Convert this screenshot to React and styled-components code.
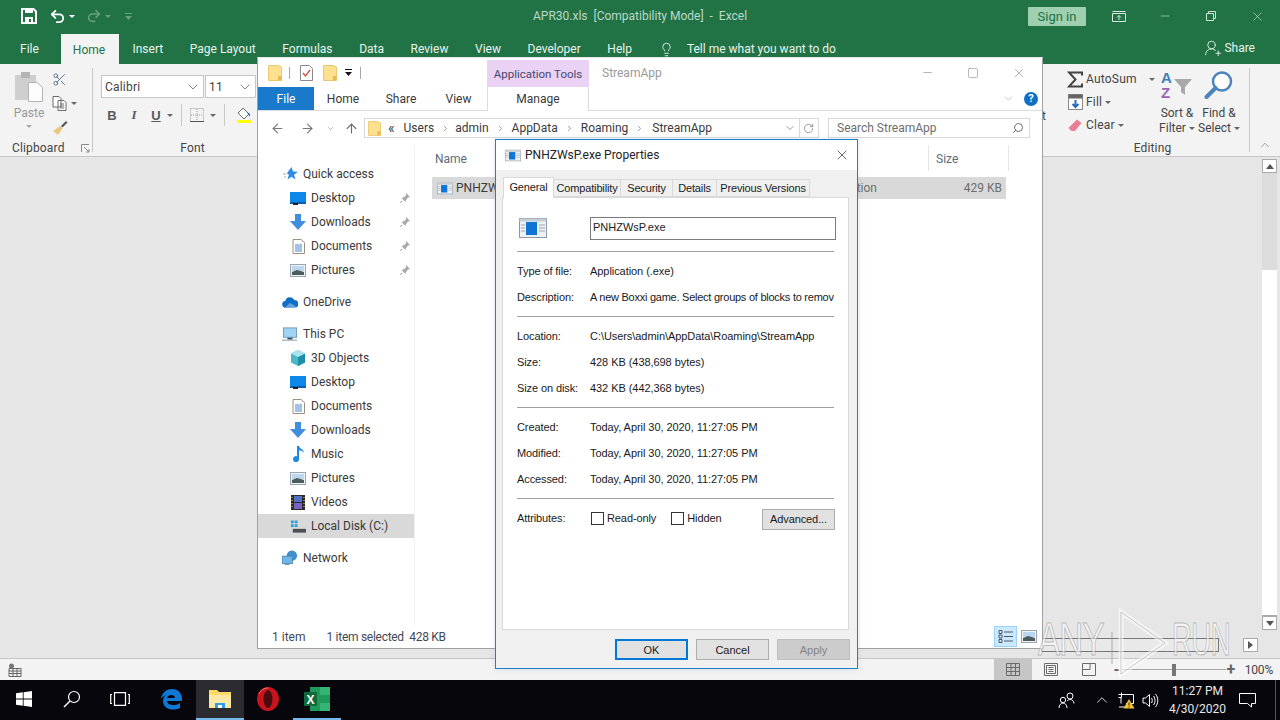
import React from 'react'
import styled, { createGlobalStyle } from 'styled-components'
import {
  ArrowLeft, ArrowRight, ArrowUp, ChevronDown, ChevronRight, ChevronUp,
  Lightbulb, RotateCw, Scissors, Search, Undo2, Redo2, UserRoundPlus, X, Minus, Square,
} from 'lucide-react'

const GlobalStyle = createGlobalStyle`
  html, body { margin: 0; padding: 0; background: #e6e6e6; }
  * { box-sizing: border-box; }
  body { font-family: "Roboto", "Liberation Sans", sans-serif; font-size: 12px; color: #444; }
`

const Screen = styled.div`
  position: relative;
  width: 1280px;
  height: 720px;
  overflow: hidden;
  display: flex;
  flex-direction: column;
  background: #e6e6e6;
`
const Grow = styled.span`
  flex: 1;
`

/* excel chrome */
const TitleBar = styled.div`
  height: 32px;
  background: #217346;
  display: flex;
  align-items: center;
  color: #fff;
`
const QuickAccess = styled.div`
  display: flex;
  align-items: center;
  width: 480px;
  padding-left: 21px;
  gap: 3px;
`
const QatItem = styled.span`
  display: flex;
  align-items: center;
  margin-left: ${p => p.$left || 0}px;
  opacity: ${p => (p.$dim ? 0.32 : 1)};
`
const Caption = styled.div`
  flex: 1;
  padding-left: 53px;
  font-size: 12px;
  color: #bcd8c8;
  white-space: pre;
`
const SignIn = styled.div`
  width: 58px;
  height: 19px;
  margin-right: 10px;
  background: #9ecfb1;
  border-radius: 1px;
  color: #217346;
  font-size: 13px;
  display: flex;
  align-items: center;
  justify-content: center;
`
const WinCtrl = styled.div`
  width: 46px;
  display: flex;
  justify-content: center;
  color: #cfe3d7;
`
const TabBar = styled.div`
  height: 32px;
  background: #217346;
  display: flex;
  align-items: flex-end;
  padding-left: 7px;
  color: #e8f2ec;
`
const RibbonTab = styled.div`
  height: ${p => (p.$active ? 30 : 32)}px;
  padding: 2px ${p => p.$padR || p.$pad || 13.3}px 0 ${p => p.$pad || 13.3}px;
  display: flex;
  align-items: center;
  gap: 12.5px;
  font-size: 12px;
  background: ${p => (p.$active ? '#f3f3f3' : 'transparent')};
  color: ${p => (p.$active ? '#217346' : '#e8f2ec')};
`
const ShareBox = styled.div`
  margin-left: auto;
  margin-right: 25px;
  height: 32px;
  display: flex;
  align-items: center;
  gap: 2px;
  font-size: 12px;
`
const Ribbon = styled.div`
  height: 93px;
  background: #f3f3f3;
  border-bottom: 1px solid #c6c6c6;
  display: flex;
  padding-top: 4px;
`
const Group = styled.div`
  width: ${p => p.$w}px;
  height: 84px;
  border-right: 1px solid #c8c8c8;
  display: flex;
  flex-direction: column;
`
const GroupBody = styled.div`
  flex: 1;
  display: flex;
  min-height: 0;
`
const GroupLabel = styled.div`
  height: 16px;
  margin-bottom: -4px;
  display: flex;
  align-items: center;
  justify-content: ${p => (p.$split ? 'space-between' : 'center')};
  padding: 0 ${p => (p.$split ? 2 : 0)}px 0 ${p => (p.$split ? 12 : 0)}px;
  letter-spacing: 0.15px;
  color: #444;
`
const PasteCol = styled.div`
  width: 46px;
  margin-left: 6px;
  padding-top: 3px;
  display: flex;
  flex-direction: column;
  align-items: center;
  color: #9a9a9a;
  line-height: 16px;
`
const PasteLabel = styled.span`
  margin: 2px 0 4px;
`
const ClipTools = styled.div`
  display: flex;
  flex-direction: column;
  gap: 4px;
  margin-top: 1px;
`
const ToolRow = styled.div`
  height: 20px;
  display: flex;
  align-items: center;
  gap: 4px;
`
const TinyCaret = styled.span`
  display: inline-block;
  vertical-align: middle;
  width: 0;
  height: 0;
  border-left: 3px solid transparent;
  border-right: 3px solid transparent;
  border-top: 3px solid ${p => p.$color || '#666'};
  margin-left: ${p => p.$left || 0}px;
`
const FontTools = styled.div`
  flex: 1;
  padding: 7px 0 0 8px;
  display: flex;
  flex-direction: column;
  gap: 6px;
`
const Combo = styled.div`
  width: ${p => p.$w}px;
  height: 23px;
  background: #fff;
  border: 1px solid #c6c6c6;
  display: flex;
  align-items: center;
  justify-content: space-between;
  padding: 0 2px 0 3px;
  color: #444;
  letter-spacing: 0.2px;
`
const ComboRow = styled.div`
  display: flex;
  gap: 1px;
`
const FormatRow = styled.div`
  display: flex;
  align-items: center;
  height: 22px;
  color: #5a5a5a;
`
const FormatBtn = styled.span`
  width: 22px;
  text-align: center;
  font-family: ${p => (p.$italic ? '"Liberation Serif", serif' : '"Liberation Sans", sans-serif')};
  font-size: 13px;
  font-weight: 700;
  font-style: ${p => (p.$italic ? 'italic' : 'normal')};
  text-decoration: ${p => (p.$under ? 'underline' : 'none')};
`
const FormatSep = styled.span`
  width: 1px;
  height: 22px;
  background: #c8c8c8;
  margin: 0 ${p => p.$r || 8}px 0 8px;
`
const Covered = styled.div`
  flex: 1;
  display: flex;
  justify-content: flex-end;
  padding: 41px 10px 0 0;
`
const EditStack = styled.div`
  width: 100px;
  padding: 1px 0 0 11px;
  display: flex;
  flex-direction: column;
  gap: 3px;
  letter-spacing: 0.2px;
`
const EditRow = styled.div`
  height: 20px;
  display: flex;
  align-items: center;
  gap: 3px;
`
const EditIconBox = styled.span`
  width: 16px;
  display: flex;
  justify-content: center;
`
const BigTool = styled.div`
  width: ${p => p.$w}px;
  display: flex;
  flex-direction: column;
  align-items: center;
  line-height: 15px;
  text-align: center;
  white-space: nowrap;
`
const BigIcon = styled.div`
  height: 38px;
  padding-top: 2px;
`
const Collapse = styled.div`
  width: 30px;
  display: flex;
  justify-content: center;
  align-items: flex-end;
  height: 84px;
  color: #666;
`

/* sheet area with its scrollbars */
const Sheet = styled.div`
  flex: 1;
  display: flex;
  flex-direction: column;
  padding: 2px 3px 6px 0;
  min-height: 0;
  background: #e6e6e6;
`
const VTrack = styled.div`
  align-self: flex-end;
  flex: 1;
  width: 15px;
  display: flex;
  flex-direction: column;
  background: #dcdcdc;
`
const ScrollBtn = styled.div`
  width: 15px;
  height: 14px;
  background: #fff;
  border: 1px solid #ababab;
  display: flex;
  align-items: center;
  justify-content: center;
`
const VThumb = styled.div`
  margin-top: 97px;
  flex: 1;
  background: #fff;
  border-bottom: 1px solid #ababab;
`
const HRow = styled.div`
  height: 14px;
  margin-top: 8px;
  display: flex;
  align-items: center;
  justify-content: flex-end;
  padding-right: 19px;
`
const HThumb = styled.div`
  width: 178px;
  height: 14px;
  border: 1px solid #777;
  margin-right: 24px;
  background: #e9e9e9;
`
const Arrow = styled.span`
  width: 0;
  height: 0;
  border-style: solid;
  border-color: transparent;
  border-width: ${p => (p.$dir === 'right' ? '4px 0 4px 5px' : p.$dir === 'up' ? '0 4px 5px 4px' : '5px 4px 0 4px')};
  ${p => (p.$dir === 'right' ? 'border-left-color: #555;' : p.$dir === 'up' ? 'border-bottom-color: #555;' : 'border-top-color: #555;')}
`
const StatusBar = styled.div`
  height: 22px;
  background: #f3f3f3;
  border-top: 1px solid #c6c6c6;
  display: flex;
  align-items: center;
  padding: 0 7px 0 8px;
`
const ViewBtn = styled.div`
  width: 38px;
  height: 21px;
  display: flex;
  align-items: center;
  justify-content: center;
  background: ${p => (p.$on ? '#c6c6c6' : 'transparent')};
`
const ZoomSlider = styled.div`
  width: 124px;
  margin-left: 4px;
  height: 21px;
  display: flex;
  align-items: center;
`
const ZoomSign = styled.span`
  font-size: 16px;
  font-weight: 700;
  color: #666;
  width: 10px;
  text-align: center;
`
const ZoomTrack = styled.div`
  flex: 1;
  height: 1px;
  background: #a8a8a8;
  display: flex;
  align-items: center;
  justify-content: center;
`
const ZoomThumb = styled.div`
  width: 4px;
  height: 12px;
  background: #777;
  flex-shrink: 0;
`
const Percent = styled.div`
  margin-left: 9px;
  color: #444;
  letter-spacing: -0.2px;
`

/* taskbar */
const Taskbar = styled.div`
  height: 40px;
  background: #06060c;
  display: flex;
  align-items: center;
  color: #fff;
`
const TaskBtn = styled.div`
  width: 48px;
  height: 40px;
  margin-left: ${p => p.$left || 0}px;
  display: flex;
  align-items: center;
  justify-content: center;
  background: ${p => (p.$active ? '#2b2b30' : 'transparent')};
  border-bottom: 2px solid ${p => (p.$open ? '#76b9ed' : 'transparent')};
`
const TrayIcon = styled.div`
  width: 24px;
  margin-left: ${p => p.$left || 0}px;
  display: flex;
  justify-content: center;
  align-items: center;
`
const Clock = styled.div`
  width: 60px;
  margin-left: 5.5px;
  text-align: center;
  line-height: 18px;
  color: #e8e8e8;
`
const ShowDesktop = styled.div`
  width: 1px;
  height: 40px;
  margin: 0 4px 0 16px;
  background: #55555a;
`

/* file explorer window */
const ExplorerWin = styled.div`
  position: absolute;
  left: 257px;
  top: 57px;
  width: 786px;
  height: 592px;
  background: #fff;
  border: 1px solid #a0a0a0;
  border-top-color: #e8e8e8;
  display: flex;
  flex-direction: column;
  color: #3a3a3a;
`
const ExTitle = styled.div`
  height: 29px;
  display: flex;
  align-items: center;
  padding-left: 10px;
`
const QatSep = styled.span`
  width: 1px;
  height: 12px;
  background: #a9a9a9;
  margin: 0 10px 0 7px;
`
const AppTools = styled.div`
  margin-left: 116px;
  width: 102px;
  height: 27px;
  align-self: flex-end;
  background: #ead2f5;
  color: #47476b;
  display: flex;
  align-items: center;
  justify-content: center;
  font-size: 11.5px;
`
const AppName = styled.div`
  margin-left: 13px;
  flex: 1;
  color: #9a9a9a;
`
const ExCtrl = styled.div`
  width: 46px;
  display: flex;
  justify-content: center;
  color: #777;
`
const ExTabs = styled.div`
  height: 24px;
  display: flex;
  align-items: stretch;
  border-bottom: 1px solid #dadbdc;
`
const FileTab = styled.div`
  width: 56px;
  background: #1979ca;
  color: #fff;
  display: flex;
  align-items: center;
  justify-content: center;
`
const ExTab = styled.div`
  width: ${p => p.$w}px;
  display: flex;
  align-items: center;
  justify-content: center;
  ${p => p.$ctx && 'border-left: 1px solid #dadbdc; border-right: 1px solid #dadbdc; background: #fff; height: 24px;'}
`
const HelpArea = styled.div`
  margin-left: auto;
  display: flex;
  align-items: center;
  gap: 9px;
  padding-right: 4px;
  color: #a0a0a0;
`
const HelpDot = styled.span`
  width: 14px;
  height: 14px;
  border-radius: 50%;
  background: #0f6fc6;
  color: #fff;
  font-size: 11px;
  font-weight: 700;
  display: flex;
  align-items: center;
  justify-content: center;
`
const AddressRow = styled.div`
  height: 34px;
  display: flex;
  align-items: center;
  padding-left: 11px;
  color: #7a7a7a;
`
const NavArrow = styled.span`
  width: ${p => p.$w || 30}px;
  margin-left: ${p => p.$left || 0}px;
  display: flex;
  justify-content: center;
  color: ${p => p.$color || '#7a7a7a'};
`
const AddressBox = styled.div`
  width: 455px;
  height: 20px;
  border: 1px solid #d9d9d9;
  display: flex;
  align-items: center;
  padding-left: 3px;
  color: #3a3a3a;
`
const Crumb = styled.span`
  margin-left: ${p => p.$left || 10}px;
`
const BackMark = styled(Crumb)`
  font-size: 14px;
  line-height: 14px;
`
const CrumbSep = styled.span`
  margin-left: 7px;
  display: flex;
  color: #7f7f7f;
`
const AddressTail = styled.span`
  margin-left: auto;
  padding-right: 4px;
  display: flex;
  align-items: center;
  gap: 2px;
  color: #6a6a6a;
`
const TailSep = styled.span`
  width: 1px;
  height: 18px;
  background: #d9d9d9;
  margin: 0 1px;
`
const SearchBox = styled.div`
  width: 202px;
  height: 20px;
  margin-left: 9px;
  border: 1px solid #d9d9d9;
  display: flex;
  align-items: center;
  justify-content: space-between;
  padding: 0 5px 0 8px;
  color: #6d6d6d;
`
const MirrorSearch = styled(Search)`
  transform: scaleX(-1);
`
const ExMain = styled.div`
  flex: 1;
  display: flex;
  min-height: 0;
`
const Sidebar = styled.div`
  width: 157px;
  padding-top: 17px;
  border-right: 1px solid #f2f2f2;
`
const NavSection = styled.div`
  margin-bottom: 8px;
`
const NavRow = styled.div`
  height: 24px;
  padding-left: ${p => (p.$child ? 32 : 24)}px;
  padding-right: 3px;
  display: flex;
  align-items: center;
  gap: 5px;
  color: #3a3a3a;
  background: ${p => (p.$selected ? '#d9d9d9' : 'transparent')};
`
const NavIcon = styled.span`
  width: 16px;
  height: 16px;
  display: flex;
  align-items: center;
  justify-content: center;
`
const PinBox = styled.span`
  margin-left: auto;
  display: flex;
`
const FileList = styled.div`
  flex: 1;
`
const ListHead = styled.div`
  height: 26px;
  display: flex;
  color: #5a6b7c;
`
const HeadCell = styled.div`
  width: ${p => p.$w}px;
  padding: 2px 0 0 ${p => p.$left}px;
  display: flex;
  align-items: center;
  border-right: 1px solid #e5e5e5;
`
const FileRow = styled.div`
  height: 22px;
  margin: 6px 0 0 17px;
  width: 574px;
  background: #d9d9d9;
  display: flex;
  align-items: center;
  padding-left: 5px;
  color: #3a3a3a;
`
const FileName = styled.span`
  margin-left: 3px;
  flex: 1;
`
const FileType = styled.span`
  color: #6d6d6d;
`
const FileSize = styled.span`
  width: 129px;
  padding-right: 4px;
  text-align: right;
  color: #6d6d6d;
`
const ExStatus = styled.div`
  height: 23px;
  display: flex;
  align-items: center;
  padding-left: 14px;
  color: #3f4a55;
`
const StatusText = styled.span`
  margin-left: ${p => p.$left || 0}px;
  white-space: pre;
  letter-spacing: ${p => (p.$tight ? -0.28 : 0)}px;
`
const ViewToggle = styled.div`
  margin-left: auto;
  margin-right: 2px;
  display: flex;
  align-items: center;
`
const ToggleBtn = styled.span`
  width: 23px;
  height: 21px;
  display: flex;
  align-items: center;
  justify-content: center;
  background: ${p => (p.$on ? '#cce8ff' : 'transparent')};
  border: 1px solid ${p => (p.$on ? '#99d1ff' : 'transparent')};
`

/* properties dialog */
const Dialog = styled.div`
  position: absolute;
  left: 495px;
  top: 139px;
  width: 363px;
  height: 530px;
  background: #f0f0f0;
  border: 1px solid #1b80c8;
  display: flex;
  flex-direction: column;
  font-family: "Liberation Sans", Arial, sans-serif;
  font-size: 11px;
  color: #1a1a1a;
  box-shadow: 0 0 6px rgba(120, 160, 190, 0.25);
`
const DlgTitle = styled.div`
  height: 30px;
  background: #fff;
  display: flex;
  align-items: center;
  padding: 0 7px 0 9px;
  font-family: "Roboto", sans-serif;
  font-size: 12px;
  gap: 4px;
  color: #222;
`
const DlgClose = styled.span`
  margin-left: auto;
  display: flex;
  color: #333;
`
const TabStrip = styled.div`
  height: 27px;
  display: flex;
  align-items: flex-end;
  padding-left: 7px;
`
const DlgTab = styled.div`
  width: ${p => p.$w}px;
  height: ${p => (p.$active ? 21 : 18)}px;
  padding-bottom: ${p => (p.$active ? 3 : 0)}px;
  background: ${p => (p.$active ? '#fff' : '#f0f0f0')};
  border: 1px solid #d9d9d9;
  border-bottom: ${p => (p.$active ? 'none' : '1px solid #d9d9d9')};
  border-left: ${p => (p.$active ? '1px solid #d9d9d9' : 'none')};
  display: flex;
  align-items: center;
  justify-content: center;
  white-space: nowrap;
  letter-spacing: -0.15px;
  position: relative;
  margin-bottom: ${p => (p.$active ? -1 : 0)}px;
  z-index: ${p => (p.$active ? 1 : 0)};
`
const Panel = styled.div`
  height: 433px;
  margin: 0 8px 0 6px;
  background: #fff;
  border: 1px solid #d9d9d9;
  padding: 0 14px;
`
const Head = styled.div`
  height: 53px;
  display: flex;
  align-items: center;
  padding-top: 7px;
`
const BigIconBox = styled.span`
  width: 73px;
  padding-left: 2px;
  display: flex;
`
const NameField = styled.div`
  width: 246px;
  height: 23px;
  border: 1px solid #7a7a7a;
  display: flex;
  align-items: center;
  padding: 0 0 2px 2px;
  margin-right: -3px;
`
const Section = styled.div`
  border-top: 1px solid #a0a0a0;
  padding: 6px 0;
`
const InfoRow = styled.div`
  height: 26px;
  display: flex;
  align-items: center;
`
const InfoLabel = styled.span`
  width: 73px;
  flex-shrink: 0;
  letter-spacing: -0.1px;
`
const InfoValue = styled.span`
  width: 245px;
  overflow: hidden;
  white-space: nowrap;
  letter-spacing: ${p => (p.$tight ? -0.25 : -0.06)}px;
`
const AttrRow = styled.div`
  height: 26px;
  display: flex;
  align-items: center;
  white-space: nowrap;
  letter-spacing: -0.1px;
`
const CheckBox = styled.span`
  width: 13px;
  height: 13px;
  margin-left: ${p => p.$left || 0}px;
  margin-right: 3px;
  border: 1px solid #333;
  background: #fff;
  flex-shrink: 0;
`
const Btn = styled.div`
  width: 73px;
  height: 21px;
  margin-left: ${p => p.$left || 0}px;
  background: ${p => (p.$disabled ? '#cccccc' : '#e1e1e1')};
  border: ${p => (p.$primary ? '2px solid #0078d7' : `1px solid ${p.$disabled ? '#bfbfbf' : '#adadad'}`)};
  color: ${p => (p.$disabled ? '#838383' : '#1a1a1a')};
  display: flex;
  align-items: center;
  justify-content: center;
`
const AdvancedBtn = styled(Btn)`
  margin-left: auto;
  margin-right: -1px;
  margin-top: 2px;
`
const DlgButtons = styled.div`
  display: flex;
  justify-content: flex-end;
  padding: 9px 7px 0 0;
`

/* watermark over the whole page */
const Watermark = styled.div`
  position: absolute;
  left: 1038px;
  top: 608px;
  width: 200px;
  height: 72px;
  pointer-events: none;
  display: flex;
  align-items: center;
  gap: 5px;
`
const MarkText = styled.span`
  font-family: "Liberation Sans", sans-serif;
  font-size: 46px;
  display: inline-block;
  flex-shrink: 0;
  margin-top: -10px;
  width: ${p => p.$w}px;
  transform: scaleX(${p => p.$sx});
  transform-origin: left center;
  color: rgba(255, 255, 255, 0.5);
  -webkit-text-stroke: 1px rgba(130, 130, 130, 0.5);
  letter-spacing: -1px;
  white-space: nowrap;
`
const PlaySvg = styled.svg`
  flex-shrink: 0;
  overflow: visible;
`

/* small drawings */
const Folder = ({ w = 14, h = 16 }) => (
  <svg width={w} height={h} viewBox="0 0 14 16">
    <path d="M.5.5h9.500l3.500 1.500v13.500H.5z" fill="#ffe08e" stroke="#e8c873" />
    <rect x="10" y="11" width="3.500" height="4.500" fill="#eab94f" />
  </svg>
)
const ExeIcon = ({ big }) => (
  <svg width={big ? 28 : 16} height={big ? 20 : 13} viewBox="0 0 28 20">
    <rect x=".5" y=".5" width="27" height="19" fill="#eef2f5" stroke="#8b99a6" />
    <rect x=".5" y=".5" width="27" height="3" fill="#c5ced6" />
    <rect x="7" y="4" width="11" height="13" fill="#0f74d6" />
    <path d="M2 7h4M2 10h4M2 13h4M20 7h6M20 10h6M20 13h6" stroke="#9aa8b5" />
  </svg>
)
const Screenish = () => (
  <svg width="16" height="13" viewBox="0 0 16 13">
    <rect width="16" height="12" fill="#0e88e8" />
    <rect y="10" width="16" height="2" fill="#0b5fae" />
    <rect x="3" y="11" width="5" height="2" fill="#222" />
  </svg>
)
const DownBlue = () => (
  <svg width="16" height="16" viewBox="0 0 16 16">
    <path d="M5 0h6v7h5l-8 9-8-9h5z" fill="#3f8ee0" />
  </svg>
)
const Doc = () => (
  <svg width="13" height="15" viewBox="0 0 13 15">
    <path d="M1 .5h8l3.500 3v11H1z" fill="#fff" stroke="#9a8f83" />
    <path d="M3 6h7M3 8h7M3 10h7M3 12h7" stroke="#3f8ad0" />
  </svg>
)
const Pic = () => (
  <svg width="16" height="13" viewBox="0 0 16 13">
    <rect x=".5" y=".5" width="15" height="12" fill="#eef3f7" stroke="#9aa5ad" />
    <path d="M2 2h12v5H2z" fill="#bcd6ee" />
    <path d="M2 8l5-2 7 2v3H2z" fill="#4c5b5f" />
  </svg>
)
const Pin = () => (
  <svg width="12" height="12" viewBox="0 0 12 12">
    <path d="M7 1l4 4-2 .5-2 2.500-.5 2-4-4 2-.5L7 3.500z" fill="#a8a8a8" />
    <path d="M3 9l-2 2" stroke="#a8a8a8" />
  </svg>
)
const Star = () => (
  <svg width="15" height="15" viewBox="0 0 15 15">
    <path d="M8.500 0l1.600 4.600 4.900.2-3.900 3 1.400 4.800-4-2.900-4 2.900 1.400-4.800-2-1.500z" fill="#2f8ce0" />
    <path d="M0 7h3M1 10h2" stroke="#7fb5e4" />
  </svg>
)
const Cloud = () => (
  <svg width="17" height="12" viewBox="0 0 17 12">
    <path d="M4 12a3.500 3.500 0 0 1-.5-7A5 5 0 0 1 13 4a4 4 0 0 1 .5 8z" fill="#0f6fc6" />
    <path d="M3 12l5-5 4 2 4 3z" fill="#fff" opacity=".35" />
  </svg>
)
const Pc = () => (
  <svg width="17" height="15" viewBox="0 0 17 15">
    <rect x="1.500" y=".5" width="14" height="10" fill="#9fd4f5" stroke="#6f9ab5" />
    <path d="M6 11h5v1.500H6zM0 13.500h16" stroke="#7a95a8" />
  </svg>
)
const Cube = () => (
  <svg width="16" height="16" viewBox="0 0 16 16">
    <path d="M8 0l7 3.500v9L8 16l-7-3.500v-9z" fill="#4db7c9" />
    <path d="M8 7l7-3.500v9L8 16z" fill="#1d8fa6" />
    <path d="M8 0l7 3.500L8 7 1 3.500z" fill="#a6e4ee" />
  </svg>
)
const Note = () => (
  <svg width="13" height="16" viewBox="0 0 13 16">
    <path d="M5 0h2c.5 3 5 3 5 7-1-2-3-2.500-5-2.500V13a3 3 0 1 1-2-2.700z" fill="#1f8ae6" />
  </svg>
)
const Film = () => (
  <svg width="14" height="15" viewBox="0 0 14 15">
    <rect width="14" height="15" fill="#2a2a2a" />
    <rect x="3" y="1" width="8" height="6" fill="#5570c8" />
    <rect x="3" y="8" width="8" height="6" fill="#7a62c0" />
    <path d="M1 2v1M1 5v1M1 8v1M1 11v1M13 2v1M13 5v1M13 8v1M13 11v1" stroke="#e8d060" />
  </svg>
)
const Disk = () => (
  <svg width="17" height="15" viewBox="0 0 17 15">
    <path d="M1 1h3v3H1zM5 1h3v3H5zM1 5h3v3H1zM5 5h3v3H5z" fill="#26a0da" />
    <rect x="3" y="10" width="14" height="4" fill="#4a4f55" />
  </svg>
)
const Net = () => (
  <svg width="17" height="16" viewBox="0 0 17 16">
    <circle cx="10.500" cy="5.500" r="5.500" fill="#3d8fd0" />
    <rect x="0" y="6" width="11" height="8" fill="#6fb6e6" stroke="#3b7eae" strokeWidth=".8" />
    <path d="M3 15h5" stroke="#6a8ea6" />
  </svg>
)
const Checked = () => (
  <svg width="13" height="16" viewBox="0 0 13 16">
    <path d="M.5.5h9l3 3v12H.5z" fill="#fff" stroke="#8a8a8a" />
    <path d="M3 8l2.500 3L10 5" stroke="#c8503a" strokeWidth="1.300" fill="none" />
  </svg>
)
const QatDrop = ({ color = '#111' }) => (
  <svg width="9" height="9" viewBox="0 0 9 9">
    <path d="M1 1.500h7" stroke={color} />
    <path d="M1 4h7L4.500 8z" fill={color} />
  </svg>
)
const SaveIcon = () => (
  <svg width="16" height="16" viewBox="0 0 16 16">
    <path d="M1 1h11.500L15 3.500V15H1z" fill="none" stroke="#fff" strokeWidth="2" />
    <rect x="4" y="1" width="8" height="4" fill="#fff" />
    <rect x="4" y="9" width="8" height="6" fill="#fff" />
    <rect x="8" y="11" width="2" height="3" fill="#217346" />
  </svg>
)
const DisplayIcon = () => (
  <svg width="14" height="11" viewBox="0 0 14 11">
    <path d="M.5 2.500h13v8H.5zM.5.5h13" fill="none" stroke="#d7e7dd" />
    <path d="M7 9V4.500M5 6.500l2-2 2 2" fill="none" stroke="#d7e7dd" />
  </svg>
)
const RestoreIcon = () => (
  <svg width="10" height="10" viewBox="0 0 10 10">
    <path d="M.5 2.500h7v7h-7zM2.500 2.500v-2h7v7h-2" fill="none" stroke="#cfe3d7" />
  </svg>
)
const PasteIcon = () => (
  <svg width="30" height="32" viewBox="0 0 30 32">
    <rect x="1" y="4" width="21" height="25" fill="#cfcfcf" />
    <rect x="7" y="1" width="9" height="6" fill="#b5b5b5" />
    <path d="M14.500 11.500h9l5 5v14h-14z" fill="#fdfdfd" stroke="#b4b4b4" />
  </svg>
)
const CopyIcon = () => (
  <svg width="15" height="15" viewBox="0 0 15 15">
    <path d="M1 .5h6l2 2V11H1zM6 4.500h6l2 2v8H6z" fill="#fff" stroke="#6b6b6b" />
    <path d="M8 8h4M8 10h4M8 12h4" stroke="#6b6b6b" />
  </svg>
)
const BrushIcon = () => (
  <svg width="16" height="15" viewBox="0 0 16 15">
    <path d="M9 6l5-5 1.500 1.500-5 5z" fill="#555" />
    <path d="M1 11l7-5 2.500 2.500L6 15z" fill="#e9c77f" />
  </svg>
)
const LauncherIcon = () => (
  <svg width="9" height="9" viewBox="0 0 9 9">
    <path d="M.5 8V.5H8M3 3l5 5M8 5v3H5" fill="none" stroke="#8a8a8a" />
  </svg>
)
const BorderIcon = () => (
  <svg width="14" height="14" viewBox="0 0 14 14">
    <rect x=".5" y=".5" width="13" height="13" fill="none" stroke="#9a9a9a" strokeDasharray="1 1" />
    <path d="M7 1v12M1 7h12" stroke="#9a9a9a" strokeDasharray="1 1" />
    <path d="M0 13.500h14" stroke="#555" />
  </svg>
)
const FillIcon = () => (
  <svg width="16" height="17" viewBox="0 0 16 17">
    <path d="M7 1l6 6-5 5-6-6z" fill="#fff" stroke="#6a6a6a" />
    <path d="M10 4l4 3v3z" fill="#2b6cb8" />
    <rect x="1" y="13" width="14" height="3" fill="#ffff00" />
  </svg>
)
const SigmaIcon = () => (
  <svg width="16" height="17" viewBox="0 0 16 17">
    <path d="M15 4.500V1.500H2L8.500 8.500 2 15.500h13v-3" fill="none" stroke="#444" strokeWidth="2" />
  </svg>
)
const FillDown = () => (
  <svg width="15" height="16" viewBox="0 0 15 16">
    <rect x=".5" y=".5" width="14" height="15" fill="#fff" stroke="#8a8a8a" />
    <rect x=".5" y=".5" width="14" height="4" fill="#666" />
    <path d="M7.500 6v7M4.500 10l3 3 3-3" fill="none" stroke="#2b6cb8" strokeWidth="2" />
  </svg>
)
const Eraser = () => (
  <svg width="14" height="13" viewBox="0 0 14 13">
    <path d="M9 .5L13.500 4 7 12H3.500L.5 9z" fill="#e87f95" />
  </svg>
)
const SortIcon = () => (
  <svg width="32" height="30" viewBox="0 0 32 30">
    <text x="0" y="13" fontFamily="Liberation Sans" fontWeight="700" fontSize="15" fill="#3f7fc0">A</text>
    <text x="0" y="28" fontFamily="Liberation Sans" fontWeight="700" fontSize="15" fill="#9c62b8">Z</text>
    <path d="M13 9h18l-7 8v8l-4-3v-5z" fill="#a8a8a8" />
  </svg>
)
const FindIcon = () => (
  <svg width="30" height="30" viewBox="0 0 30 30">
    <circle cx="18" cy="11.500" r="9" fill="#fff" stroke="#4b84bc" strokeWidth="2.500" />
    <path d="M11.500 18L2.500 27" stroke="#4b84bc" strokeWidth="4" strokeLinecap="round" />
  </svg>
)
const CellModeIcon = () => (
  <svg width="14" height="14" viewBox="0 0 14 14">
    <circle cx="3.500" cy="3" r="2.500" fill="#777" />
    <path d="M1 5.500h12v8H1zM1 8h12M1 10.500h12M5 5.500v8M9 5.500v8" fill="none" stroke="#666" />
  </svg>
)
const GridIcon = () => (
  <svg width="14" height="13" viewBox="0 0 14 13">
    <path d="M.5.5h13v12H.5zM.5 4.500h13M.5 8.500h13M5 .5v12M9.500.5v12" fill="none" stroke="#6a6a6a" />
  </svg>
)
const PageIcon = () => (
  <svg width="14" height="13" viewBox="0 0 14 13">
    <path d="M.5.5h13v12H.5zM2.500 2.500h9v8h-9zM4.500 4.500h5M4.500 6.500h5M4.500 8.500h5" fill="none" stroke="#6a6a6a" />
  </svg>
)
const BreakIcon = () => (
  <svg width="14" height="13" viewBox="0 0 14 13">
    <path d="M.5.500h13v12H.5zM8 .5v6H.5" fill="none" stroke="#6a6a6a" />
  </svg>
)
const DetailsIcon = () => (
  <svg width="16" height="15" viewBox="0 0 16 15">
    <path d="M1 1.500h3v3H1zM1 6h3v3H1zM1 10.500h3v3H1z" fill="none" stroke="#4a5a68" />
    <path d="M6 3h9M6 7.500h9M6 12h9" stroke="#4a5a68" />
  </svg>
)
const WinLogo = () => (
  <svg width="16" height="16" viewBox="0 0 16 16">
    <path d="M0 2.300l6.800-1v6.300H0zM7.600 1.200L16 0v7.600H7.600zM0 8.400h6.800v6.400L0 13.800zM7.600 8.400H16V16l-8.400-1.200z" fill="#fff" />
  </svg>
)
const TaskSearch = () => (
  <svg width="18" height="18" viewBox="0 0 18 18">
    <circle cx="11" cy="7" r="5.500" fill="none" stroke="#fff" strokeWidth="1.200" />
    <path d="M7 11l-6 6" stroke="#fff" strokeWidth="1.400" />
  </svg>
)
const TaskView = () => (
  <svg width="20" height="14" viewBox="0 0 20 14">
    <path d="M4.500.7h11v12.600h-11zM2 2.500H.7v9H2M18 2.500h1.300v9H18" fill="none" stroke="#fff" strokeWidth="1.200" />
  </svg>
)
const EdgeLogo = () => (
  <svg width="22" height="22" viewBox="0 0 22 22">
    <path d="M1 11C2 4 7 1 12 1c6 0 10 4 10 10v2H7c.5 4 7 6 13 2v5c-6 3-17 2-17-7 0-3 2-6 5-7-3 1-6 3-7 5zm6-1h8c0-4-7-4-8 0z" fill="#0f78d4" />
  </svg>
)
const ExplorerLogo = () => (
  <svg width="24" height="20" viewBox="0 0 24 20">
    <path d="M1 1h8l2 2h12v16H1z" fill="#ffd868" />
    <path d="M1 6h22v13H1z" fill="#fbe9a5" />
    <path d="M7 14h10v5H7z" fill="#2f9ee8" />
    <path d="M10 16h4v3h-4z" fill="#fff" />
  </svg>
)
const OperaLogo = () => (
  <svg width="22" height="24" viewBox="0 0 22 24">
    <ellipse cx="11" cy="12" rx="11" ry="12" fill="#c8141c" />
    <ellipse cx="11" cy="12" rx="4.500" ry="9" fill="#4a0b0e" />
    <path d="M2 7c2-4 5-6 9-6" stroke="#f77" fill="none" />
  </svg>
)
const ExcelLogo = () => (
  <svg width="26" height="24" viewBox="0 0 26 24">
    <rect x="6" y="0" width="20" height="24" fill="#1f9a5c" />
    <path d="M16 0h10v8H16zM16 16h10v8H16z" fill="#35b573" />
    <rect x="0" y="5" width="13" height="14" fill="#0f6b39" />
    <text x="6.500" y="16.500" textAnchor="middle" fontFamily="Liberation Sans" fontWeight="700" fontSize="12" fill="#fff">X</text>
  </svg>
)
const PeopleIcon = () => (
  <svg width="18" height="17" viewBox="0 0 18 17">
    <circle cx="12" cy="4" r="3" fill="none" stroke="#fff" />
    <circle cx="5" cy="8" r="2.700" fill="none" stroke="#fff" />
    <path d="M1 16c0-3 2-5 4-5s4 2 4 5M9 9c1-1 2-1.500 3-1.500 2 0 4 1.500 4 4" fill="none" stroke="#fff" />
  </svg>
)
const NetWarn = () => (
  <svg width="17" height="17" viewBox="0 0 17 17">
    <path d="M.5 2.500h15v9H8M3.500 .5v5h-3M3 5.500v6M1 15h7" fill="none" stroke="#fff" />
    <path d="M11 7l5.500 9.500h-11z" fill="#f2c230" />
    <path d="M11 10.500v3M11 14.500v1" stroke="#222" />
  </svg>
)
const VolumeIcon = () => (
  <svg width="17" height="15" viewBox="0 0 17 15">
    <path d="M1 5h2.500L7.500 1.500v12L3.500 10H1z" fill="none" stroke="#fff" />
    <path d="M9.500 5c1 1.300 1 3.700 0 5M11.500 3c2 2.500 2 6.500 0 9M13.500 1c3 3.500 3 9.500 0 13" fill="none" stroke="#fff" />
  </svg>
)
const NotifyIcon = () => (
  <svg width="17" height="15" viewBox="0 0 17 15">
    <path d="M.5.5h16v10h-4v3.500l-4-3.500H.5z" fill="none" stroke="#fff" />
  </svg>
)
const PlayMark = () => (
  <PlaySvg width="48" height="72" viewBox="0 0 48 72">
    <path d="M2 4v62l44-31z" fill="none" stroke="rgba(255,255,255,.55)" strokeWidth="5" />
    <path d="M2 4v62l44-31z" fill="none" stroke="rgba(130,130,130,.4)" strokeWidth="1" />
    <path d="M-7 24v32" fill="none" stroke="rgba(130,130,130,.4)" strokeWidth="1.500" />
  </PlaySvg>
)

const quickNav = [
  ['Desktop', <Screenish />],
  ['Downloads', <DownBlue />],
  ['Documents', <Doc />],
  ['Pictures', <Pic />],
]
const pcNav = [
  ['3D Objects', <Cube />],
  ['Desktop', <Screenish />],
  ['Documents', <Doc />],
  ['Downloads', <DownBlue />],
  ['Music', <Note />],
  ['Pictures', <Pic />],
  ['Videos', <Film />],
]
const generalRows = [
  ['Type of file:', 'Application (.exe)'],
  ['Description:', 'A new Boxxi game. Select groups of blocks to remove them', true],
]
const locationRows = [
  ['Location:', 'C:\\Users\\admin\\AppData\\Roaming\\StreamApp'],
  ['Size:', '428 KB (438,698 bytes)'],
  ['Size on disk:', '432 KB (442,368 bytes)'],
]
const dateRows = [
  ['Created:', 'Today, April 30, 2020, 11:27:05 PM'],
  ['Modified:', 'Today, April 30, 2020, 11:27:05 PM'],
  ['Accessed:', 'Today, April 30, 2020, 11:27:05 PM'],
]

const Info = ({ rows }) => (
  <Section>
    {rows.map(([label, value, tight]) => (
      <InfoRow key={label}>
        <InfoLabel>{label}</InfoLabel>
        <InfoValue $tight={tight}>{value}</InfoValue>
      </InfoRow>
    ))}
  </Section>
)

const Explorer = () => (
  <ExplorerWin>
    <ExTitle>
      <Folder />
      <QatSep />
      <QatItem><Checked /></QatItem>
      <QatItem $left={10}><Folder /></QatItem>
      <QatItem $left={7}><QatDrop /></QatItem>
      <QatSep />
      <AppTools>Application Tools</AppTools>
      <AppName>StreamApp</AppName>
      <ExCtrl><Minus size={13} strokeWidth={1} /></ExCtrl>
      <ExCtrl><Square size={12} strokeWidth={1} /></ExCtrl>
      <ExCtrl><X size={14} strokeWidth={1} /></ExCtrl>
    </ExTitle>
    <ExTabs>
      <FileTab>File</FileTab>
      <ExTab $w={58}>Home</ExTab>
      <ExTab $w={58}>Share</ExTab>
      <ExTab $w={57}>View</ExTab>
      <ExTab $w={102} $ctx>Manage</ExTab>
      <HelpArea>
        <ChevronDown size={13} strokeWidth={1.2} />
        <HelpDot>?</HelpDot>
      </HelpArea>
    </ExTabs>
    <AddressRow>
      <NavArrow $w={16}><ArrowLeft size={15} strokeWidth={1.8} /></NavArrow>
      <NavArrow $left={7}><ArrowRight size={15} strokeWidth={1.8} /></NavArrow>
      <NavArrow $w={16} $color="#9a9a9a"><ChevronDown size={9} strokeWidth={2} /></NavArrow>
      <NavArrow $w={26} $color="#6a6a6a"><ArrowUp size={15} strokeWidth={1.8} /></NavArrow>
      <AddressBox>
        <Folder w={13} h={15} />
        <BackMark $left={7}>«</BackMark>
        <Crumb $left={9}>Users</Crumb>
        <CrumbSep><ChevronRight size={9} strokeWidth={2} /></CrumbSep>
        <Crumb $left={5}>admin</Crumb>
        <CrumbSep><ChevronRight size={9} strokeWidth={2} /></CrumbSep>
        <Crumb $left={7}>AppData</Crumb>
        <CrumbSep><ChevronRight size={9} strokeWidth={2} /></CrumbSep>
        <Crumb $left={7}>Roaming</Crumb>
        <CrumbSep><ChevronRight size={9} strokeWidth={2} /></CrumbSep>
        <Crumb $left={8}>StreamApp</Crumb>
        <AddressTail>
          <ChevronDown size={12} strokeWidth={1.4} />
          <TailSep />
          <RotateCw size={11} strokeWidth={1.4} />
        </AddressTail>
      </AddressBox>
      <SearchBox>
        Search StreamApp
        <MirrorSearch size={12} strokeWidth={2} />
      </SearchBox>
    </AddressRow>
    <ExMain>
      <Sidebar>
        <NavSection>
          <NavRow><NavIcon><Star /></NavIcon>Quick access</NavRow>
          {quickNav.map(([name, icon]) => (
            <NavRow $child key={name}>
              <NavIcon>{icon}</NavIcon>{name}<PinBox><Pin /></PinBox>
            </NavRow>
          ))}
        </NavSection>
        <NavSection>
          <NavRow><NavIcon><Cloud /></NavIcon>OneDrive</NavRow>
        </NavSection>
        <NavSection>
          <NavRow><NavIcon><Pc /></NavIcon>This PC</NavRow>
          {pcNav.map(([name, icon]) => (
            <NavRow $child key={name}><NavIcon>{icon}</NavIcon>{name}</NavRow>
          ))}
          <NavRow $child $selected><NavIcon><Disk /></NavIcon>Local Disk (C:)</NavRow>
        </NavSection>
        <NavSection>
          <NavRow><NavIcon><Net /></NavIcon>Network</NavRow>
        </NavSection>
      </Sidebar>
      <FileList>
        <ListHead>
          <HeadCell $w={514} $left={20}>Name</HeadCell>
          <HeadCell $w={80} $left={7}>Size</HeadCell>
        </ListHead>
        <FileRow>
          <ExeIcon />
          <FileName>PNHZWsP.exe</FileName>
          <FileType>Application</FileType>
          <FileSize>429 KB</FileSize>
        </FileRow>
      </FileList>
    </ExMain>
    <ExStatus>
      <StatusText>1 item</StatusText>
      <StatusText $left={21} $tight>1 item selected  428 KB</StatusText>
      <ViewToggle>
        <ToggleBtn $on><DetailsIcon /></ToggleBtn>
        <ToggleBtn><Pic /></ToggleBtn>
      </ViewToggle>
    </ExStatus>
  </ExplorerWin>
)

const Properties = () => (
  <Dialog>
    <DlgTitle>
      <ExeIcon />
      PNHZWsP.exe Properties
      <DlgClose><X size={16} strokeWidth={1.1} /></DlgClose>
    </DlgTitle>
    <TabStrip>
      <DlgTab $w={51} $active>General</DlgTab>
      <DlgTab $w={67}>Compatibility</DlgTab>
      <DlgTab $w={52}>Security</DlgTab>
      <DlgTab $w={44}>Details</DlgTab>
      <DlgTab $w={93}>Previous Versions</DlgTab>
    </TabStrip>
    <Panel>
      <Head>
        <BigIconBox><ExeIcon big /></BigIconBox>
        <NameField>PNHZWsP.exe</NameField>
      </Head>
      <Info rows={generalRows} />
      <Info rows={locationRows} />
      <Info rows={dateRows} />
      <Section>
        <AttrRow>
          <InfoLabel>Attributes:</InfoLabel>
          <CheckBox $left={1} />Read-only
          <CheckBox $left={15} />Hidden
          <AdvancedBtn>Advanced...</AdvancedBtn>
        </AttrRow>
      </Section>
    </Panel>
    <DlgButtons>
      <Btn $primary>OK</Btn>
      <Btn $left={8}>Cancel</Btn>
      <Btn $left={8} $disabled>Apply</Btn>
    </DlgButtons>
  </Dialog>
)

const App = () => (
  <>
    <GlobalStyle />
    <Screen>
      <TitleBar>
        <QuickAccess>
          <QatItem><SaveIcon /></QatItem>
          <QatItem $left={9}><Undo2 size={17} strokeWidth={2.6} color="#fff" /></QatItem>
          <QatItem><TinyCaret $color="#fff" /></QatItem>
          <QatItem $left={8} $dim><Redo2 size={16} strokeWidth={2.4} color="#fff" /></QatItem>
          <QatItem $dim><TinyCaret $color="#fff" /></QatItem>
          <QatItem $left={10} $dim><QatDrop color="#fff" /></QatItem>
        </QuickAccess>
        <Caption>APR30.xls  [Compatibility Mode]  -  Excel</Caption>
        <SignIn>Sign in</SignIn>
        <WinCtrl><DisplayIcon /></WinCtrl>
        <WinCtrl><Minus size={14} strokeWidth={1} /></WinCtrl>
        <WinCtrl><RestoreIcon /></WinCtrl>
        <WinCtrl><X size={15} strokeWidth={1} /></WinCtrl>
      </TitleBar>
      <TabBar>
        <RibbonTab $pad={13} $padR={22}>File</RibbonTab>
        <RibbonTab $active $pad={12} $padR={14}>Home</RibbonTab>
        <RibbonTab>Insert</RibbonTab>
        <RibbonTab>Page Layout</RibbonTab>
        <RibbonTab>Formulas</RibbonTab>
        <RibbonTab>Data</RibbonTab>
        <RibbonTab>Review</RibbonTab>
        <RibbonTab>View</RibbonTab>
        <RibbonTab>Developer</RibbonTab>
        <RibbonTab>Help</RibbonTab>
        <RibbonTab $pad={14.2}><Lightbulb size={15} strokeWidth={1.4} />Tell me what you want to do</RibbonTab>
        <ShareBox><UserRoundPlus size={18} strokeWidth={1.2} />Share</ShareBox>
      </TabBar>
      <Ribbon>
        <Group $w={93}>
          <GroupBody>
            <PasteCol>
              <PasteIcon />
              <PasteLabel>Paste</PasteLabel>
              <TinyCaret $color="#aaa" />
            </PasteCol>
            <ClipTools>
              <ToolRow><Scissors size={15} color="#4c6a8a" strokeWidth={1.4} /></ToolRow>
              <ToolRow><CopyIcon /><TinyCaret /></ToolRow>
              <ToolRow><BrushIcon /></ToolRow>
            </ClipTools>
          </GroupBody>
          <GroupLabel $split>Clipboard<LauncherIcon /></GroupLabel>
        </Group>
        <Group $w={200}>
          <GroupBody>
            <FontTools>
              <ComboRow>
                <Combo $w={103}>Calibri<ChevronDown size={16} strokeWidth={1} /></Combo>
                <Combo $w={51}>11<ChevronDown size={16} strokeWidth={1} /></Combo>
              </ComboRow>
              <FormatRow>
                <FormatBtn>B</FormatBtn>
                <FormatBtn $italic>I</FormatBtn>
                <FormatBtn $under>U</FormatBtn>
                <TinyCaret />
                <FormatSep />
                <BorderIcon /><TinyCaret $left={6} />
                <FormatSep $r={11} />
                <FillIcon />
              </FormatRow>
            </FontTools>
          </GroupBody>
          <GroupLabel>Font</GroupLabel>
        </Group>
        <Covered>Format</Covered>
        <Group $w={194}>
          <GroupBody>
            <EditStack>
              <EditRow><EditIconBox><SigmaIcon /></EditIconBox>AutoSum<TinyCaret $left={9} /></EditRow>
              <EditRow><EditIconBox><FillDown /></EditIconBox>Fill<TinyCaret /></EditRow>
              <EditRow><EditIconBox><Eraser /></EditIconBox>Clear<TinyCaret /></EditRow>
            </EditStack>
            <BigTool $w={42}>
              <BigIcon><SortIcon /></BigIcon>
              <span>Sort &amp;</span>
              <span>Filter<TinyCaret $left={3} /></span>
            </BigTool>
            <BigTool $w={42}>
              <BigIcon><FindIcon /></BigIcon>
              <span>Find &amp;</span>
              <span>Select<TinyCaret $left={3} /></span>
            </BigTool>
          </GroupBody>
          <GroupLabel>Editing</GroupLabel>
        </Group>
        <Collapse><ChevronUp size={14} strokeWidth={1} /></Collapse>
      </Ribbon>
      <Sheet>
        <VTrack>
          <ScrollBtn><Arrow $dir="up" /></ScrollBtn>
          <VThumb />
          <ScrollBtn><Arrow $dir="down" /></ScrollBtn>
        </VTrack>
        <HRow>
          <HThumb />
          <ScrollBtn><Arrow $dir="right" /></ScrollBtn>
        </HRow>
      </Sheet>
      <StatusBar>
        <CellModeIcon />
        <Grow />
        <ViewBtn $on><GridIcon /></ViewBtn>
        <ViewBtn><PageIcon /></ViewBtn>
        <ViewBtn><BreakIcon /></ViewBtn>
        <ZoomSlider>
          <ZoomSign>-</ZoomSign>
          <ZoomTrack><ZoomThumb /></ZoomTrack>
          <ZoomSign>+</ZoomSign>
        </ZoomSlider>
        <Percent>100%</Percent>
      </StatusBar>
      <Taskbar>
        <TaskBtn><WinLogo /></TaskBtn>
        <TaskBtn><TaskSearch /></TaskBtn>
        <TaskBtn><TaskView /></TaskBtn>
        <TaskBtn $left={3}><EdgeLogo /></TaskBtn>
        <TaskBtn $left={1} $active $open><ExplorerLogo /></TaskBtn>
        <TaskBtn><OperaLogo /></TaskBtn>
        <TaskBtn $left={1} $open><ExcelLogo /></TaskBtn>
        <Grow />
        <TrayIcon><PeopleIcon /></TrayIcon>
        <TrayIcon $left={11}><ChevronUp size={18} strokeWidth={1.1} /></TrayIcon>
        <TrayIcon><NetWarn /></TrayIcon>
        <TrayIcon><VolumeIcon /></TrayIcon>
        <Clock>11:27 PM<br />4/30/2020</Clock>
        <TrayIcon $left={7.5}><NotifyIcon /></TrayIcon>
        <ShowDesktop />
      </Taskbar>
      <Explorer />
      <Properties />
      <Watermark>
        <MarkText $w={76} $sx={0.72}>ANY</MarkText>
        <PlayMark />
        <MarkText $w={60} $sx={0.6}>RUN</MarkText>
      </Watermark>
    </Screen>
  </>
)

export default App
